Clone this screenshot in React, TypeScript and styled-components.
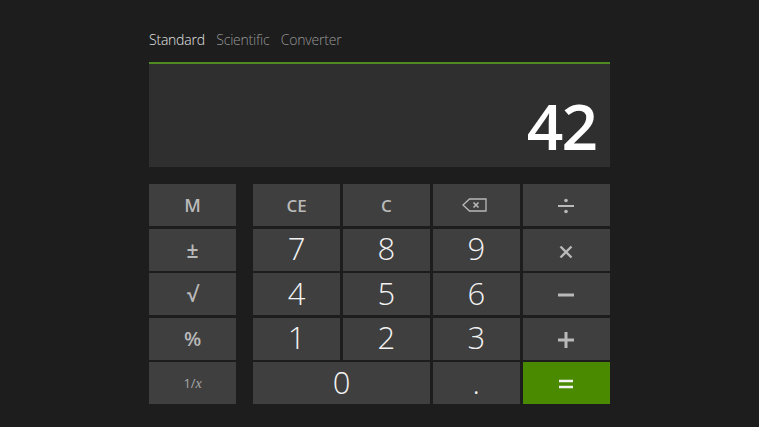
import React from "react";
import styled, { createGlobalStyle } from "styled-components";

const Global = createGlobalStyle`
  html, body { margin: 0; padding: 0; background: #1d1d1d; }
  body { font-family: "Open Sans", "Noto Sans", sans-serif; overflow: hidden; }
`;
const Page = styled.div`
  width: 759px; height: 427px; box-sizing: border-box;
  padding: 30px 149px 0; background: #1d1d1d;
`;
const Tabs = styled.nav`display: flex; gap: 11.5px; height: 20px; align-items: center; margin-bottom: 12px;`;
const Tab = styled.span<{ $active?: boolean }>`
  font-size: 14px; line-height: 20px; letter-spacing: -0.22px; font-weight: 300;
  color: ${p => (p.$active ? "#e2e2e2" : "#979797")};
`;
const Display = styled.div`
  height: 105px; box-sizing: border-box; background: #2f2f2f;
  border-top: 2px solid #4f8a22; display: flex; align-items: center;
  justify-content: flex-end; padding: 20px 14px 0 0;
  font-size: 64px; font-weight: 600; color: #fff; letter-spacing: -2px;
`;
const Pad = styled.div`
  display: grid; grid-template-columns: 87.25px 1fr; column-gap: 16.75px; margin-top: 17px;
`;
const Side = styled.div`display: grid; grid-template-rows: repeat(5, 42px); row-gap: 2.5px;`;
const Keys = styled.div`
  display: grid; grid-template-columns: repeat(4, 87.25px); grid-template-rows: repeat(5, 42px);
  gap: 2.5px 2.6px;
`;
const Key = styled.div<{ $span?: number; $kind?: "num" | "op" | "eq"; $size?: number }>`
  grid-column: span ${p => p.$span ?? 1};
  background: ${p => (p.$kind === "eq" ? "#4a8a00" : "#3f3f3f")};
  color: ${p => (p.$kind === "op" ? "#b9b9b9" : "#f2f2f2")};
  display: flex; align-items: center; justify-content: center;
  font-size: ${p => (p.$size ? `${p.$size}px` : p.$kind === "num" ? "31px" : "18px")};
  font-weight: ${p => (p.$kind === "num" ? 300 : 600)};
  padding-bottom: ${p => (p.$kind === "num" ? "3px" : "0")};
  box-sizing: border-box;
`;
const Reciprocal = styled.span`font-size: 13px; font-weight: 400; color: #a8a8a8;`;
const Italic = styled.i`font-family: "Liberation Serif", serif; font-size: 14px;`;
const Sym = styled.svg<{ $dx?: number; $dy?: number }>`
  display: block;
  margin: ${p => p.$dy ?? 0}px ${p => p.$dx ?? 0}px 0 0;
`;

const Back = () => (
  <Sym width="25" height="14" viewBox="0 0 25 14" fill="none" stroke="#b9b9b9" $dx={3}>
    <path d="M24 1H7.5L1 7l6.5 6H24z" strokeWidth="1.3" />
    <path d="M11.5 4.5l5 5M16.5 4.5l-5 5" strokeWidth="1.6" />
  </Sym>
);
const Op = ({ d, dots, w = 2.4, dy = 0 }: { d: string; dots?: boolean; w?: number; dy?: number }) => (
  <Sym width="16" height="16" viewBox="0 0 16 16" fill="none" stroke="currentColor" strokeWidth={w} $dy={dy}>
    <path d={d} />
    {dots && <><circle cx="8" cy="2.5" r="1.8" fill="currentColor" stroke="none" /><circle cx="8" cy="13.5" r="1.8" fill="currentColor" stroke="none" /></>}
  </Sym>
);

export default function App() {
  return (
    <Page>
      <Global />
      <Tabs>
        <Tab $active>Standard</Tab>
        <Tab>Scientific</Tab>
        <Tab>Converter</Tab>
      </Tabs>
      <Display>42</Display>
      <Pad>
        <Side>
          <Key $kind="op">M</Key>
          <Key $kind="op" $size={21}>±</Key>
          <Key $kind="op" $size={21}>√</Key>
          <Key $kind="op" $size={20}>%</Key>
          <Key $kind="op"><Reciprocal>1/<Italic>x</Italic></Reciprocal></Key>
        </Side>
        <Keys>
          <Key $kind="op" $size={17}>CE</Key>
          <Key $kind="op" $size={17}>C</Key>
          <Key $kind="op"><Back /></Key>
          <Key $kind="op"><Op d="M0 8h16" dots w={2} dy={1} /></Key>
          <Key $kind="num">7</Key>
          <Key $kind="num">8</Key>
          <Key $kind="num">9</Key>
          <Key $kind="op"><Op d="M2.5 2.5l11 11M13.5 2.5l-11 11" dy={4} /></Key>
          <Key $kind="num">4</Key>
          <Key $kind="num">5</Key>
          <Key $kind="num">6</Key>
          <Key $kind="op"><Op d="M0 8h16" w={3} dy={2} /></Key>
          <Key $kind="num">1</Key>
          <Key $kind="num">2</Key>
          <Key $kind="num">3</Key>
          <Key $kind="op"><Op d="M0 8h16M8 0v16" w={3} dy={3} /></Key>
          <Key $kind="num" $span={2}>0</Key>
          <Key $kind="num">.</Key>
          <Key $kind="eq"><Op d="M1 5h14M1 11h14" w={2.6} dy={2} /></Key>
        </Keys>
      </Pad>
    </Page>
  );
}
